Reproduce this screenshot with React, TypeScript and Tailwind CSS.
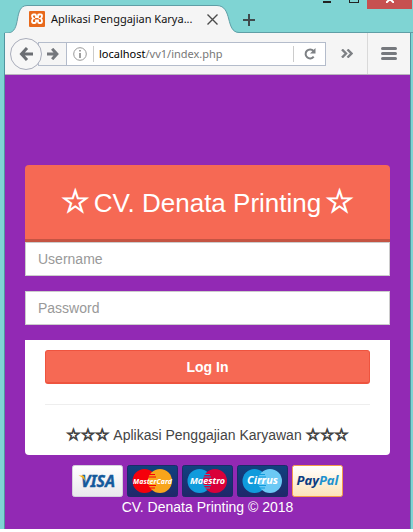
import React from 'react';

function TabStrip() {
  return (
    <header className="flex h-[33px] items-end">
      <div className="relative flex h-7 w-[243px] shrink-0 items-center">
        <svg className="absolute inset-0 h-full w-full" viewBox="0 0 243 28" fill="none" aria-hidden="true">
          <path d="M4 29V28H8C22 27 13 1 27 .5H217C233 1 225 27 239 28H243V29Z" fill="#f5f5f5" />
          <path d="M4.500 28H8C22 27 13 1 27 .5H217C233 1 225 27 239 27.500H243" stroke="#5f9ea6" />
        </svg>
        <div className="relative flex w-full items-center pr-[23px] pl-[29px]">
          <svg className="size-4 shrink-0" viewBox="0 0 16 16" fill="none" aria-hidden="true">
            <rect width="16" height="16" rx="1" fill="#e8691b" />
            <path
              d="M5 3.500H4.500Q3 3.500 3 5T4.500 7.500Q3 8 3 10T4.500 12H6Q7 12 7 10.500V9.500H9V10.500Q9 12 10 12H11.500Q13 12 13 10T11.500 7.500Q13 7 13 5T11.500 3.500H10Q9 3.500 9 5V6H7V5Q7 3.500 6 3.500Z"
              stroke="#fff"
              strokeWidth="1.800"
            />
          </svg>
          <span className="ml-[6px] flex-1 font-['Noto_Sans','Open_Sans',sans-serif] text-[11px] leading-4 whitespace-nowrap text-[#111]">
            Aplikasi Penggajian Karya...
          </span>
          <button aria-label="Close tab" className="flex size-4 shrink-0 items-center justify-center">
            <svg className="size-[11px]" viewBox="0 0 11 11" stroke="#4c4c4c" strokeWidth="1.400" aria-hidden="true">
              <path d="M.5.5 10.500 10.500M10.500.5.5 10.500" />
            </svg>
          </button>
        </div>
      </div>
      <div className="flex h-full flex-1 items-end justify-between border-b border-[#5f9ea6]">
        <button aria-label="New tab" className="mb-[6px] flex size-3 items-center justify-center">
          <svg className="size-3" viewBox="0 0 12 12" stroke="#3f4a4c" strokeWidth="2" aria-hidden="true">
            <path d="M6 0V12M0 6H12" />
          </svg>
        </button>
        <div className="mr-[1px] flex h-full items-start">
          <button aria-label="Minimize" className="flex h-[3px] w-[26px] items-end">
            <span className="h-[2px] w-2 bg-[#222]" />
          </button>
          <button aria-label="Maximize" className="flex h-[3px] w-[18px]">
            <span className="h-[3px] w-[10px] border border-t-0 border-[#222]" />
          </button>
          <button aria-label="Close window" className="flex h-[9px] w-[45px] justify-center overflow-hidden bg-[#c75050]">
            <svg className="h-[3px] w-2" viewBox="0 5 8 3" stroke="#fff" strokeWidth="2" aria-hidden="true">
              <path d="M0 0 8 8M8 0 0 8" />
            </svg>
          </button>
        </div>
      </div>
    </header>
  );
}

function Toolbar() {
  return (
    <nav className="flex h-[42px] items-center border-b border-[#b9b5bd] bg-[#f5f5f5] pl-[5px]">
      <button
        aria-label="Back"
        className="z-10 flex size-8 shrink-0 items-center justify-center rounded-full border border-[#a9adbb] bg-[#f7f7f7]"
      >
        <svg className="size-[14px]" viewBox="0 0 14 14" fill="none" stroke="#6b6e73" strokeWidth="3" aria-hidden="true">
          <path d="M8 1 2.500 7 8 13M2.500 7H14" />
        </svg>
      </button>
      <button
        aria-label="Forward"
        className="-ml-1 flex h-6 w-[29px] shrink-0 items-center justify-center border border-[#b4bccb] bg-[#f5f5f5]"
      >
        <svg className="size-3" viewBox="0 0 14 14" fill="none" stroke="#74777c" strokeWidth="3.500" aria-hidden="true">
          <path d="M6 1 11.500 7 6 13M11.500 7H0" />
        </svg>
      </button>
      <div className="-ml-px flex h-6 min-w-0 flex-1 items-center border border-[#b4bccb] bg-white pl-[6px]">
        <svg className="size-[14px] shrink-0" viewBox="0 0 14 14" fill="none" aria-hidden="true">
          <circle cx="7" cy="7" r="6.300" stroke="#999" />
          <path d="M7 6V11M7 3V4.600" stroke="#888" strokeWidth="1.600" />
        </svg>
        <div className="ml-[6px] flex h-4 min-w-0 flex-1 items-center border-l border-[#ccc] pl-[5px] font-['Noto_Sans','Open_Sans',sans-serif] text-[11px] leading-4 text-[#777]">
          <span className="text-black">localhost</span>/vv1/index.php
        </div>
        <button aria-label="Reload" className="flex h-4 w-8 shrink-0 items-center justify-center border-l border-[#ccc]">
          <svg className="size-3" viewBox="0 0 12 12" fill="none" aria-hidden="true">
            <path d="M9.500 3A4.500 4.500 0 1 0 9.700 8.700" stroke="#7d8084" strokeWidth="2" />
            <path d="M11.500 0V5.500H6Z" fill="#7d8084" />
          </svg>
        </button>
      </div>
      <button aria-label="More tools" className="flex h-6 w-[41px] shrink-0 items-center justify-center">
        <svg className="h-[9px] w-3" viewBox="0 0 12 9" fill="none" stroke="#7d8084" strokeWidth="2.400" aria-hidden="true">
          <path d="M1 .5 5 4.500 1 8.500M6.500.5 10.500 4.500 6.500 8.500" />
        </svg>
      </button>
      <button
        aria-label="Open menu"
        className="flex h-full w-[43px] shrink-0 flex-col items-center justify-center gap-[2px] border-l border-[#d9d9d9]"
      >
        <span className="h-[3px] w-4 rounded-sm bg-[#75787d]" />
        <span className="h-[3px] w-4 rounded-sm bg-[#75787d]" />
        <span className="h-[3px] w-4 rounded-sm bg-[#75787d]" />
      </button>
    </nav>
  );
}

const cardText = "font-['Noto_Sans',sans-serif] font-bold italic";

function DiscCard({ id, name, left, right, size }: { id: string; name: string; left: string; right: string; size: number }) {
  return (
    <svg className="h-8 w-[51px]" viewBox="0 0 51 32" role="img" aria-label={name}>
      <defs>
        <linearGradient id={id} x2="0" y2="1">
          <stop stopColor="#10427f" />
          <stop offset="1" stopColor="#20276a" />
        </linearGradient>
      </defs>
      <rect x=".5" y=".5" width="50" height="31" rx="2" fill={`url(#${id})`} stroke="#1c2b69" />
      <circle cx="17.500" cy="16" r="12" fill={left} />
      <circle cx="33" cy="16" r="12" fill={right} />
      <path d="M22 9.500H28M21.500 12H29M21.500 20.500H29M22 23H28" stroke={left} strokeWidth="1.200" />
      <text x="25.500" y="19" textAnchor="middle" fontSize={size} fill="#fff" className={cardText}>
        {name}
      </text>
    </svg>
  );
}

function VisaCard() {
  return (
    <svg className="h-8 w-[51px]" viewBox="0 0 51 32" role="img" aria-label="VISA">
      <defs>
        <linearGradient id="visa" x2="0" y2="1">
          <stop stopColor="#fff" />
          <stop offset="1" stopColor="#e9e9ec" />
        </linearGradient>
      </defs>
      <rect x=".5" y=".5" width="50" height="31" rx="2" fill="url(#visa)" stroke="#d5d0dc" />
      <text
        x="26"
        y="22"
        textAnchor="middle"
        fontSize="16"
        fill="#155a9c"
        stroke="#155a9c"
        strokeWidth=".4"
        className={cardText}
      >
        VISA
      </text>
      <path d="M6.500 10.500H11Q12 10.500 12.500 12.500L13 16Q11 12 6.500 10.500Z" fill="#f5b31c" />
    </svg>
  );
}

function PaypalCard() {
  return (
    <svg className="h-8 w-[51px]" viewBox="0 0 51 32" role="img" aria-label="PayPal">
      <defs>
        <linearGradient id="paypal" x2="0" y2="1">
          <stop stopColor="#fff" />
          <stop offset="1" stopColor="#fde3b8" />
        </linearGradient>
      </defs>
      <rect x=".5" y=".5" width="50" height="31" rx="2" fill="url(#paypal)" stroke="#f49a4c" />
      <text x="25.500" y="20" textAnchor="middle" fontSize="13" fill="#0b3c82" className={cardText}>
        Pay<tspan fill="#1f92cf">Pal</tspan>
      </text>
    </svg>
  );
}

function LoginPage() {
  return (
    <main className="bg-[#9229b4] px-5 pt-[90px] pb-3 text-[14px] leading-5">
      <form onSubmit={(e) => e.preventDefault()}>
        <h1 className="flex h-[77px] items-center justify-center gap-1 rounded-t border-b-[3px] border-[#c45443] bg-[#f66954] text-[26px] leading-8 text-white">
          <span className="pb-[2px] font-['DejaVu_Sans',sans-serif] text-[32px] [-webkit-text-stroke:1px]">☆</span>
          <span className="pt-[2px]">CV. Denata Printing</span>
          <span className="pb-[2px] font-['DejaVu_Sans',sans-serif] text-[32px] [-webkit-text-stroke:1px]">☆</span>
        </h1>
        <input
          aria-label="Username"
          placeholder="Username"
          className="block h-[34px] w-full border border-[#ccc] bg-white px-3 text-[#555] placeholder:text-[#999]"
        />
        <input
          type="password"
          aria-label="Password"
          placeholder="Password"
          className="mt-[15px] block h-[34px] w-full border border-[#ccc] bg-white px-3 text-[#555] placeholder:text-[#999]"
        />
        <div className="mt-[15px] rounded-b bg-white px-5 pt-[10px] pb-[10px]">
          <button
            type="submit"
            className="block h-[34px] w-full rounded-[3px] border border-b-2 border-[#ee543f] bg-[#f66954] font-bold text-white"
          >
            Log In
          </button>
          <hr className="my-5 border-[#eee]" />
          <p className="flex items-center justify-center gap-1 text-[#444]">
            <span className="font-['DejaVu_Sans',sans-serif] text-[16px] [-webkit-text-stroke:1px]">☆☆☆</span>
            <span>Aplikasi Penggajian Karyawan</span>
            <span className="font-['DejaVu_Sans',sans-serif] text-[16px] [-webkit-text-stroke:1px]">☆☆☆</span>
          </p>
        </div>
      </form>
      <footer className="mt-[10px] text-center text-white">
        <div className="flex justify-center gap-1">
          <VisaCard />
          <DiscCard id="mastercard" name="MasterCard" left="#f5000b" right="#f8a51b" size={7} />
          <DiscCard id="maestro" name="Maestro" left="#109bdc" right="#d9003a" size={9} />
          <DiscCard id="cirrus" name="Cirrus" left="#109bdc" right="#6bc9f5" size={11} />
          <PaypalCard />
        </div>
        <p>CV. Denata Printing © 2018</p>
      </footer>
    </main>
  );
}

export default function App() {
  return (
    <div className="bg-white pb-[3px] font-['Liberation_Sans',Arial,sans-serif]">
      <div className="bg-[#7fd4d3]">
        <TabStrip />
        <div className="mr-[2px] ml-1 border-x border-[#5095a0]">
          <Toolbar />
          <LoginPage />
        </div>
      </div>
    </div>
  );
}
